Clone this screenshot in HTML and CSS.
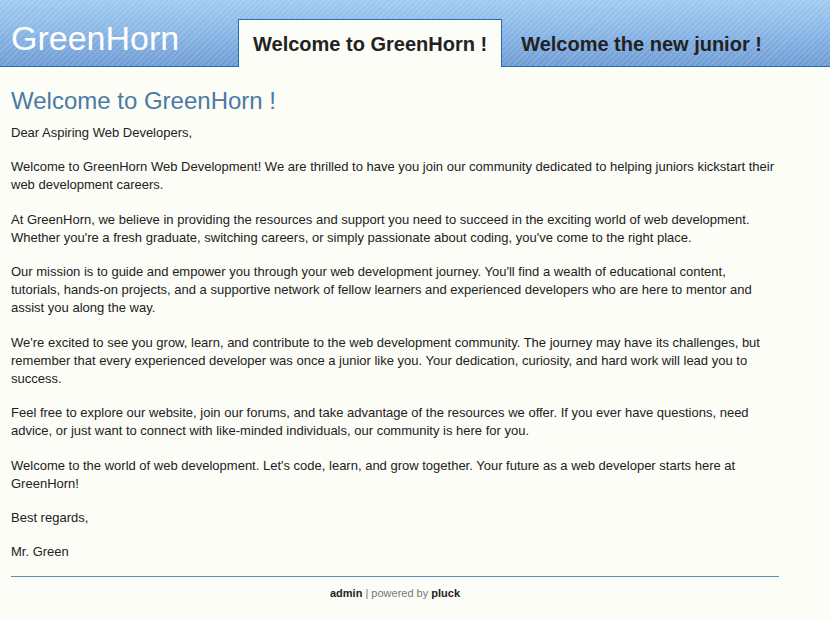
FILE: index.html
```html
<!DOCTYPE html>
<html lang="en">
<head>
<meta charset="utf-8">
<title>Welcome to GreenHorn !</title>
<link rel="stylesheet" href="styles.css">
</head>
<body>
<header class="site-header">
  <div class="logo">GreenHorn</div>
  <nav class="tabs">
    <a class="tab active" href="#">Welcome to GreenHorn !</a>
    <a class="tab" href="#">Welcome the new junior !</a>
  </nav>
</header>
<main class="content">
  <h1 class="title">Welcome to GreenHorn !</h1>
  <p>Dear Aspiring Web Developers,</p>
  <p>Welcome to GreenHorn Web Development! We are thrilled to have you join our community dedicated to helping juniors kickstart their web development careers.</p>
  <p>At GreenHorn, we believe in providing the resources and support you need to succeed in the exciting world of web development. Whether you're a fresh graduate, switching careers, or simply passionate about coding, you've come to the right place.</p>
  <p>Our mission is to guide and empower you through your web development journey. You'll find a wealth of educational content, tutorials, hands-on projects, and a supportive network of fellow learners and experienced developers who are here to mentor and assist you along the way.</p>
  <p>We're excited to see you grow, learn, and contribute to the web development community. The journey may have its challenges, but remember that every experienced developer was once a junior like you. Your dedication, curiosity, and hard work will lead you to success.</p>
  <p>Feel free to explore our website, join our forums, and take advantage of the resources we offer. If you ever have questions, need advice, or just want to connect with like-minded individuals, our community is here for you.</p>
  <p>Welcome to the world of web development. Let's code, learn, and grow together. Your future as a web developer starts here at GreenHorn!</p>
  <p>Best regards,</p>
  <p>Mr. Green</p>
</main>
<footer class="footer">
  <a class="footer-link" href="#">admin</a> | powered by <a class="footer-link" href="#">pluck</a>
</footer>
</body>
</html>
```

FILE: styles.css
```css
html, body {
  margin: 0;
  padding: 0;
}
body {
  background: #fcfdf6;
  color: #222;
  font-family: "Liberation Sans", Arial, sans-serif;
  font-size: 13px;
}
.site-header {
  height: 66px;
  display: flex;
  align-items: flex-end;
  border-bottom: 1px solid #1f70b5;
  background:
    repeating-linear-gradient(135deg, rgba(255,255,255,0.13) 0 1.5px, rgba(255,255,255,0) 1.5px 4px),
    linear-gradient(to bottom, #a0cbf0 0%, #88b5e5 50%, #6f9bd4 100%);
}
.logo {
  flex: 0 0 238px;
  box-sizing: border-box;
  padding-left: 11px;
  padding-bottom: 8px;
  font-size: 34px;
  line-height: 40px;
  color: #fff;
}
.tabs {
  display: flex;
  align-items: flex-end;
  gap: 4px;
}
.tab {
  display: block;
  padding: 12px 14px 11px;
  margin-bottom: -1px;
  border: 1px solid transparent;
  border-bottom: none;
  font-size: 20px;
  line-height: 24px;
  font-weight: bold;
  color: #222;
  text-decoration: none;
}
.tab.active {
  background: #fcfdf6;
  border-color: #1f70b5;
}
.content {
  width: 768px;
  margin: 0 11px;
  padding-top: 20px;
  padding-bottom: 15px;
  border-bottom: 1px solid #5b8fbf;
}
.title {
  margin: 0 0 9px;
  font-size: 24px;
  line-height: 28px;
  font-weight: normal;
  color: #4a7aa5;
}
.content p {
  margin: 0 0 16px;
  padding-right: 4px;
  line-height: 18.2px;
}
.content p:last-child {
  margin-bottom: 0;
}
.footer {
  width: 768px;
  margin: 0 11px;
  padding-top: 9px;
  text-align: center;
  font-size: 11px;
  line-height: 14px;
  color: #777;
}
.footer-link {
  color: #222;
  font-weight: bold;
  text-decoration: none;
}
```
